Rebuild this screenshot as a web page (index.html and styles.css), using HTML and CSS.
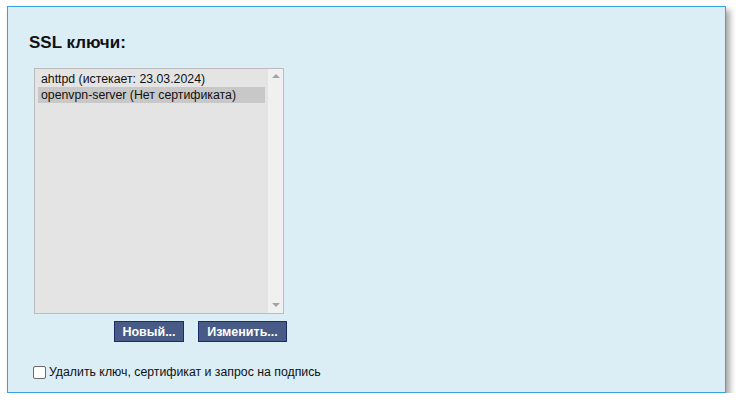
FILE: index.html
```html
<!DOCTYPE html>
<html lang="ru">
<head>
<meta charset="utf-8">
<title>SSL ключи</title>
<link rel="stylesheet" href="styles.css">
</head>
<body>
<div class="panel">
  <h2 class="title">SSL ключи:</h2>
  <div class="listbox">
    <div class="items">
      <div class="item">ahttpd (истекает: 23.03.2024)</div>
      <div class="item selected">openvpn-server (Нет сертификата)</div>
    </div>
    <div class="scrollbar">
      <span class="arrow up"></span>
      <span class="arrow down"></span>
    </div>
  </div>
  <div class="buttons">
    <button class="btn btn-new">Новый...</button>
    <button class="btn btn-edit">Изменить...</button>
  </div>
  <label class="check">
    <span class="box"></span>
    <span>Удалить ключ, сертификат и запрос на подпись</span>
  </label>
</div>
</body>
</html>
```

FILE: styles.css
```css
html, body {
  margin: 0;
  padding: 0;
  background: #ffffff;
}
body {
  padding: 6px 0 0 7px;
  font-family: "Liberation Sans", Arial, sans-serif;
  font-size: 12.3px;
  color: #111;
}
.panel {
  box-sizing: border-box;
  width: 719px;
  height: 387px;
  background: #dbedf5;
  border: 1px solid #3ba2d9;
  box-shadow: 4px 4px 6px rgba(0,0,0,0.35);
  padding: 0 0 0 26px;
  display: flex;
  flex-direction: column;
}
.title {
  margin: 26px 0 0 -5px;
  font-size: 17px;
  font-weight: bold;
  line-height: 20px;
  color: #111;
}
.listbox {
  margin-top: 15px;
  box-sizing: border-box;
  width: 250px;
  height: 246px;
  background: #e4e4e4;
  border: 1px solid #bcbcbc;
  display: flex;
}
.items {
  flex: 1;
  padding: 2px 3px 0 3px;
}
.item {
  height: 16px;
  line-height: 16px;
  padding-left: 3px;
  white-space: nowrap;
}
.item.selected {
  background: #c8c8c8;
}
.scrollbar {
  width: 15px;
  background: #f0f0f0;
  display: flex;
  flex-direction: column;
  justify-content: space-between;
  align-items: center;
  padding: 5px 0 6px;
}
.arrow {
  width: 0;
  height: 0;
  border-left: 4px solid transparent;
  border-right: 4px solid transparent;
}
.arrow.up {
  border-bottom: 4px solid #a3a3a3;
}
.arrow.down {
  border-top: 4px solid #a3a3a3;
}
.buttons {
  margin-top: 7px;
  margin-left: 80px;
  display: flex;
  gap: 14px;
}
.btn {
  box-sizing: border-box;
  height: 21px;
  background: #475b86;
  border: 1px solid #1b2b6e;
  color: #ffffff;
  font-family: "Liberation Sans", Arial, sans-serif;
  font-size: 12.5px;
  font-weight: bold;
  padding: 0;
  border-radius: 0;
}
.btn-new { width: 70px; }
.btn-edit { width: 89px; }
.check {
  margin-top: 23px;
  margin-left: -1px;
  display: flex;
  align-items: center;
  gap: 3px;
  line-height: 14px;
}
.box {
  box-sizing: border-box;
  width: 13px;
  height: 13px;
  border: 1px solid #6b6b6b;
  border-radius: 2px;
  background: #ffffff;
}
```
